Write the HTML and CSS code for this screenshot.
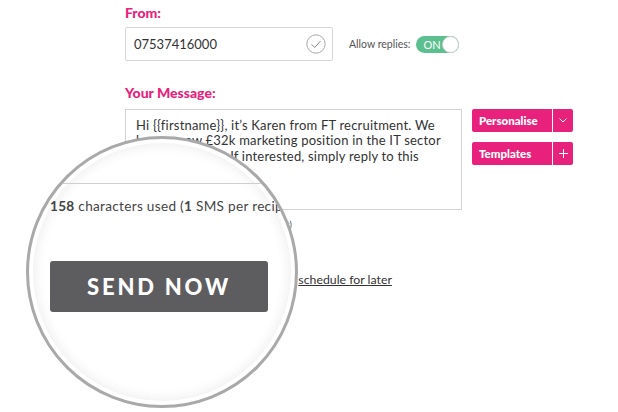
FILE: index.html
```html
<!DOCTYPE html>
<html lang="en">
<head>
    <meta charset="UTF-8">
    <title>Send SMS</title>
    <link rel="stylesheet" href="styles.css">
</head>
<body>
    <div class="compose">
        <h2 class="label">From:</h2>
        <div class="from-row">
            <div class="from-input">
                <span>07537416000</span>
                <svg class="check" width="20" height="20" viewBox="0 0 20 20">
                    <circle cx="10" cy="10" r="9.2" fill="none" stroke="#a8a8a8" stroke-width="1"/>
                    <polyline points="5.5,10.5 8.8,13.5 14.5,7" fill="none" stroke="#8f8f8f" stroke-width="1"/>
                </svg>
            </div>
            <span class="allow">Allow replies:</span>
            <div class="toggle">
                <span class="toggle-text">ON</span>
                <span class="knob"></span>
            </div>
        </div>

        <h2 class="label label-msg">Your Message:</h2>
        <div class="message-row">
            <div class="message">Hi {{firstname}}, it’s Karen from FT recruitment. We
have a new £32k marketing position in the IT sector
available today. If interested, simply reply to this
message.</div>
            <div class="tools">
                <div class="split-btn">
                    <span class="btn-main">Personalise</span>
                    <span class="btn-side">
                        <svg width="8" height="5" viewBox="0 0 8 5"><polyline points="0.5,0.5 4,4 7.5,0.5" fill="none" stroke="#fff" stroke-width="1"/></svg>
                    </span>
                </div>
                <div class="split-btn">
                    <span class="btn-main">Templates</span>
                    <span class="btn-side">
                        <svg width="9" height="9" viewBox="0 0 9 9"><path d="M4.5 0v9M0 4.5h9" stroke="#fff" stroke-width="1"/></svg>
                    </span>
                </div>
            </div>
        </div>

        <p class="counter"><b>158</b> characters used (<b>1</b> SMS per recipient)</p>

        <div class="send-row">
            <button class="send">SEND NOW</button>
            <span class="or">or <a href="#">schedule for later</a></span>
        </div>
    </div>

    <!-- magnifier over the bottom of the form -->
    <div class="lens">
        <div class="lens-rule"></div>
        <p class="lens-count"><b>158</b> characters used (<b>1</b> SMS per recipient)</p>
        <div class="lens-send">SEND NOW</div>
    </div>
</body>
</html>
```

FILE: styles.css
```css
body {
    margin: 0;
    background-color: #ffffff;
    font-family: Lato, "Open Sans", sans-serif;
    color: #333;
}
.compose {
    padding: 4px 0 0 125px;
}
.label {
    margin: 0;
    font-size: 14px;
    line-height: 17px;
    font-weight: 900;
    color: #e8227c;
}
.label-msg {
    margin-top: 23px;
}
.from-row {
    display: flex;
    align-items: center;
    margin-top: 6px;
}
.from-input {
    box-sizing: border-box;
    width: 208px;
    height: 34px;
    border: 1px solid #d6d6d6;
    border-radius: 2px;
    display: flex;
    align-items: center;
    justify-content: space-between;
    padding: 0 6px 0 8px;
    font-size: 13px;
    color: #333;
}
.allow {
    margin-left: 16px;
    font-size: 10.5px;
    color: #555;
}
.toggle {
    box-sizing: border-box;
    width: 43px;
    height: 17px;
    margin-left: 6px;
    border-radius: 9px;
    background-color: #5bbf8f;
    display: flex;
    align-items: center;
    padding-left: 7px;
}
.toggle-text {
    font-size: 11px;
    color: #fff;
}
.knob {
    box-sizing: border-box;
    width: 17px;
    height: 17px;
    margin-left: auto;
    border-radius: 50%;
    background-color: #fff;
    border: 1px solid #cfcfcf;
}
.message-row {
    display: flex;
    align-items: flex-start;
    margin-top: 8px;
}
.message {
    box-sizing: border-box;
    width: 337px;
    height: 101px;
    border: 1px solid #d3d3d3;
    padding: 8px 10px;
    font-size: 13px;
    letter-spacing: 0.2px;
    line-height: 15.4px;
    white-space: pre-line;
    color: #333;
}
.tools {
    display: flex;
    flex-direction: column;
    gap: 10px;
    margin-left: 10px;
}
.split-btn {
    display: flex;
    gap: 1px;
    height: 23px;
}
.btn-main {
    width: 80px;
    background-color: #e8227c;
    color: #fff;
    font-size: 11.5px;
    font-weight: 900;
    display: flex;
    align-items: center;
    padding-left: 7px;
    box-sizing: border-box;
    border-radius: 2px 0 0 2px;
}
.btn-side {
    width: 20px;
    background-color: #e8227c;
    display: flex;
    align-items: center;
    justify-content: center;
    border-radius: 0 2px 2px 0;
}
.counter {
    margin: 9px 0 0;
    font-size: 8.7px;
    letter-spacing: 0.2px;
    line-height: 12px;
    color: #444;
}
.send-row {
    display: flex;
    align-items: center;
    margin-top: 31px;
}
.send {
    width: 145px;
    height: 34px;
    border: none;
    border-radius: 2px;
    background-color: #5d5c5e;
    color: #fff;
    font-family: inherit;
    font-weight: 900;
    font-size: 14px;
    letter-spacing: 2px;
}
.or {
    margin-left: 14px;
    font-size: 12.3px;
    color: #333;
}
.or a {
    color: #333;
}

/* magnifier */
.lens {
    position: absolute;
    left: 26px;
    top: 136px;
    width: 272px;
    height: 272px;
    box-sizing: border-box;
    border: 3px solid #a9a9a9;
    border-radius: 50%;
    overflow: hidden;
    background-color: #fff;
    box-shadow: inset 0 0 0 4px #fff, inset 0 0 14px 4px rgba(0, 0, 0, 0.09);
}
.lens-rule {
    margin-top: 44px;
    height: 1px;
    background-color: #cfcfcf;
}
.lens-count {
    margin: 13px 0 0 21px;
    font-size: 13.6px;
    letter-spacing: 0.3px;
    line-height: 18px;
    color: #444;
    white-space: nowrap;
}
.lens-send {
    margin: 46px 0 0 21px;
    width: 218px;
    height: 51px;
    border-radius: 3px;
    background-color: #5d5c5e;
    color: #fff;
    font-weight: 900;
    font-size: 22px;
    letter-spacing: 2.8px;
    display: flex;
    align-items: center;
    justify-content: center;
}
```
